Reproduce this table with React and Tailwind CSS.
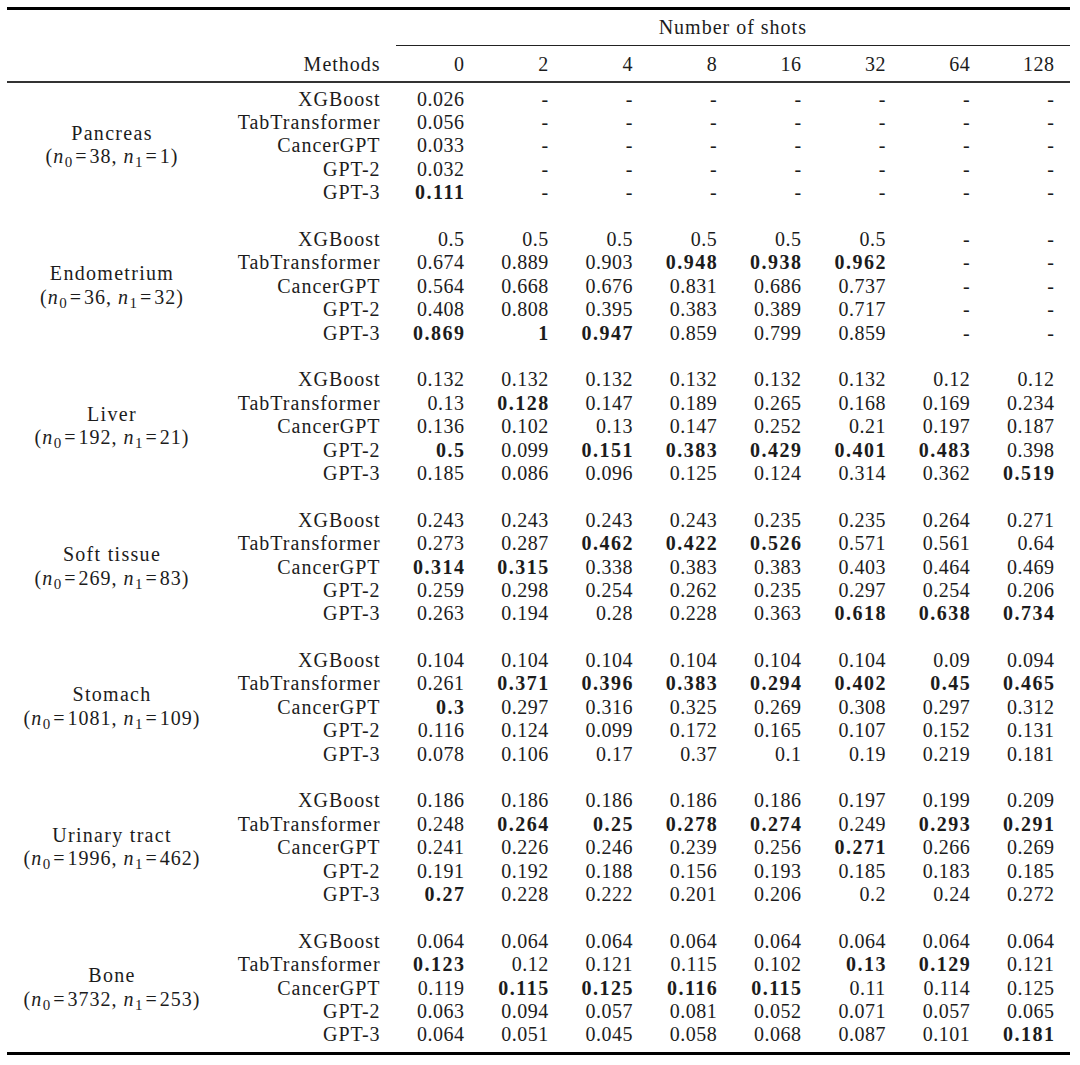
import React from 'react';

const SHOTS = ['0', '2', '4', '8', '16', '32', '64', '128'];
const METHODS = ['XGBoost', 'TabTransformer', 'CancerGPT', 'GPT-2', 'GPT-3'];
const D = '- - - - - - -';

// '*' marks the best value of a column (bold)
const GROUPS = [
  {
    name: 'Pancreas',
    n0: '38',
    n1: '1',
    rows: [`0.026 ${D}`, `0.056 ${D}`, `0.033 ${D}`, `0.032 ${D}`, `*0.111 ${D}`],
  },
  {
    name: 'Endometrium',
    n0: '36',
    n1: '32',
    rows: [
      '0.5 0.5 0.5 0.5 0.5 0.5 - -',
      '0.674 0.889 0.903 *0.948 *0.938 *0.962 - -',
      '0.564 0.668 0.676 0.831 0.686 0.737 - -',
      '0.408 0.808 0.395 0.383 0.389 0.717 - -',
      '*0.869 *1 *0.947 0.859 0.799 0.859 - -',
    ],
  },
  {
    name: 'Liver',
    n0: '192',
    n1: '21',
    rows: [
      '0.132 0.132 0.132 0.132 0.132 0.132 0.12 0.12',
      '0.13 *0.128 0.147 0.189 0.265 0.168 0.169 0.234',
      '0.136 0.102 0.13 0.147 0.252 0.21 0.197 0.187',
      '*0.5 0.099 *0.151 *0.383 *0.429 *0.401 *0.483 0.398',
      '0.185 0.086 0.096 0.125 0.124 0.314 0.362 *0.519',
    ],
  },
  {
    name: 'Soft tissue',
    n0: '269',
    n1: '83',
    rows: [
      '0.243 0.243 0.243 0.243 0.235 0.235 0.264 0.271',
      '0.273 0.287 *0.462 *0.422 *0.526 0.571 0.561 0.64',
      '*0.314 *0.315 0.338 0.383 0.383 0.403 0.464 0.469',
      '0.259 0.298 0.254 0.262 0.235 0.297 0.254 0.206',
      '0.263 0.194 0.28 0.228 0.363 *0.618 *0.638 *0.734',
    ],
  },
  {
    name: 'Stomach',
    n0: '1081',
    n1: '109',
    rows: [
      '0.104 0.104 0.104 0.104 0.104 0.104 0.09 0.094',
      '0.261 *0.371 *0.396 *0.383 *0.294 *0.402 *0.45 *0.465',
      '*0.3 0.297 0.316 0.325 0.269 0.308 0.297 0.312',
      '0.116 0.124 0.099 0.172 0.165 0.107 0.152 0.131',
      '0.078 0.106 0.17 0.37 0.1 0.19 0.219 0.181',
    ],
  },
  {
    name: 'Urinary tract',
    n0: '1996',
    n1: '462',
    rows: [
      '0.186 0.186 0.186 0.186 0.186 0.197 0.199 0.209',
      '0.248 *0.264 *0.25 *0.278 *0.274 0.249 *0.293 *0.291',
      '0.241 0.226 0.246 0.239 0.256 *0.271 0.266 0.269',
      '0.191 0.192 0.188 0.156 0.193 0.185 0.183 0.185',
      '*0.27 0.228 0.222 0.201 0.206 0.2 0.24 0.272',
    ],
  },
  {
    name: 'Bone',
    n0: '3732',
    n1: '253',
    rows: [
      '0.064 0.064 0.064 0.064 0.064 0.064 0.064 0.064',
      '*0.123 0.12 0.121 0.115 0.102 *0.13 *0.129 0.121',
      '0.119 *0.115 *0.125 *0.116 *0.115 0.11 0.114 0.125',
      '0.063 0.094 0.057 0.081 0.052 0.071 0.057 0.065',
      '0.064 0.051 0.045 0.058 0.068 0.087 0.101 *0.181',
    ],
  },
];

function Cell({ v }) {
  const bold = v.startsWith('*');
  const text = bold ? v.slice(1) : v;
  return (
    <div className="w-[84.3px] shrink-0 pr-[16px] text-right">
      {bold ? (
        <span className="font-bold tracking-[1.5px] -mr-[1.5px]">{text}</span>
      ) : (
        <span className="tracking-[0.5px] -mr-[0.5px]">{text}</span>
      )}
    </div>
  );
}

// math-style n with a subscript index, followed by "="
function N({ i }) {
  return (
    <>
      <i className="tracking-[1.5px]">n</i>
      <span className="relative top-[4px] text-[15px] leading-none tracking-[1px]">{i}</span>
      <span className="mx-[2px]">=</span>
    </>
  );
}

function Group({ g, last }) {
  return (
    <div className={last ? '' : 'pb-[23.4px]'}>
      <div className="flex">
        <div className="w-[210px] shrink-0 flex flex-col items-center justify-center text-center leading-[23.4px] tracking-[1px]">
          <div className="tracking-[1.3px]">{g.name}</div>
          <div>
            (<N i="0" />{g.n0}, <N i="1" />{g.n1})
          </div>
        </div>
        <div className="flex flex-col">
          {g.rows.map((r, idx) => (
            <div key={idx} className="flex h-[23.4px] items-center">
              <div className="w-[178.6px] shrink-0 pr-[16px] text-right">
                <span className="tracking-[1px] -mr-[1px]">{METHODS[idx]}</span>
              </div>
              {r.split(' ').map((v, j) => (
                <Cell key={j} v={v} />
              ))}
            </div>
          ))}
        </div>
      </div>
    </div>
  );
}

export default function App() {
  return (
    <div
      className="w-[1080px] h-[1065px] bg-white pt-[7px] pl-[7px] text-[20px] text-[#1c1c1c]"
      style={{ fontFamily: '"Liberation Serif", "Times New Roman", serif' }}
    >
      <div className="w-[1063px]">
        <div className="border-t-[3px] border-black" />
        <div className="flex h-[36px]">
          <div className="w-[388.6px] shrink-0" />
          <div className="w-[674.4px] flex items-center justify-center pb-[1px] border-b border-[#222] tracking-[1px]">
            Number of shots
          </div>
        </div>
        <div className="flex h-[35px] items-center">
          <div className="w-[210px] shrink-0" />
          <div className="w-[178.6px] shrink-0 pr-[16px] text-right">
            <span className="tracking-[1px] -mr-[1px]">Methods</span>
          </div>
          {SHOTS.map((s) => (
            <div key={s} className="w-[84.3px] shrink-0 pr-[16px] text-right">
              <span className="tracking-[0.5px] -mr-[0.5px]">{s}</span>
            </div>
          ))}
        </div>
        <div className="border-t-2 border-[#333]" />
        <div className="pt-[4px] pb-[6px]">
          {GROUPS.map((g, i) => (
            <Group key={g.name} g={g} last={i === GROUPS.length - 1} />
          ))}
        </div>
        <div className="border-t-[3px] border-black" />
      </div>
    </div>
  );
}
